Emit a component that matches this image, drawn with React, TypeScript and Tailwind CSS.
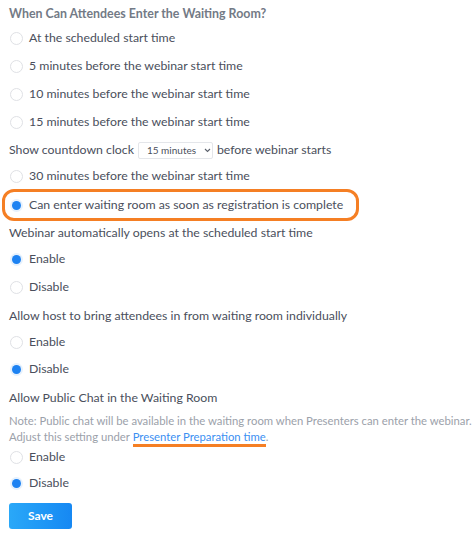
import React from "react";

type RadioProps = { label: string; checked?: boolean; h: string };

function Radio({ label, checked, h }: RadioProps) {
  return (
    <div className={`flex items-center whitespace-nowrap ${h}`}>
      {checked ? (
        <span className="w-[13px] h-[13px] rounded-full bg-[#e6f1fd] flex items-center justify-center ml-[1px]">
          <span className="w-[9px] h-[9px] rounded-full bg-[#1d82f2]" />
        </span>
      ) : (
        <span className="w-[13px] h-[13px] rounded-full border border-[#dfe1e5] bg-white ml-[1px]" />
      )}
      <span className="ml-[6px] text-[12.3px] text-[#4a4f5c]">{label}</span>
    </div>
  );
}

export default function App() {
  return (
    <div
      className="w-[476px] h-[533px] bg-white pl-[9px] overflow-hidden whitespace-nowrap"
      style={{ fontFamily: "Lato, 'Noto Sans', sans-serif" }}
    >
      <div className="h-[24px] pt-[4px] flex items-center text-[12.4px] font-bold text-[#737a86]">
        When Can Attendees Enter the Waiting Room?
      </div>
      <Radio h="h-[28px]" label="At the scheduled start time" />
      <Radio h="h-[28px]" label="5 minutes before the webinar start time" />
      <Radio h="h-[28px]" label="10 minutes before the webinar start time" />
      <Radio h="h-[28px]" label="15 minutes before the webinar start time" />

      <div className="h-[28px] flex items-center text-[12.3px] text-[#4a4f5c]">
        <span>Show countdown clock</span>
        <span className="mx-[4px] h-[17px] w-[75px] border border-[#e4e6ea] rounded-[2px] flex items-center pl-[8px] text-[10px] text-[#4a4f5c]">
          15 minutes
          <svg className="ml-[8px]" width="7" height="5" viewBox="0 0 7 5" fill="none">
            <path d="M1 1l2.5 2.5L6 1" stroke="#5b616c" strokeWidth="1.1" />
          </svg>
        </span>
        <span>before webinar starts</span>
      </div>
      <Radio h="h-[25px]" label="30 minutes before the webinar start time" />

      <div className="-ml-[7px] w-[357px] h-[32px] border-[3px] border-[#f57f24] rounded-[12px] pl-[4px] flex items-center">
        <Radio h="h-[26px]" checked label="Can enter waiting room as soon as registration is complete" />
      </div>

      <div className="h-[24px] flex items-center text-[12.3px] text-[#4a4f5c]">
        Webinar automatically opens at the scheduled start time
      </div>
      <Radio h="h-[28px]" checked label="Enable" />
      <Radio h="h-[28px]" label="Disable" />

      <div className="h-[30px] flex items-center text-[12.3px] text-[#4a4f5c]">
        Allow host to bring attendees in from waiting room individually
      </div>
      <Radio h="h-[23px]" label="Enable" />
      <Radio h="h-[30px]" checked label="Disable" />

      <div className="h-[28px] flex items-center text-[12.3px] text-[#4a4f5c]">
        Allow Public Chat in the Waiting Room
      </div>
      <div className="pt-[1px] text-[11.3px] leading-[16px] text-[#9ba1aa]">
        <div>Note: Public chat will be available in the waiting room when Presenters can enter the webinar.</div>
        <div>
          Adjust this setting under{" "}
          <span className="text-[#3b8ff2] border-b-[3px] border-[#f57f24] pb-[1px]">Presenter Preparation time</span>.
        </div>
      </div>
      <Radio h="h-[24px]" label="Enable" />
      <Radio h="h-[29px]" checked label="Disable" />

      <button className="mt-[5px] w-[63px] h-[26px] rounded-[3px] bg-gradient-to-r from-[#2aa8f8] to-[#1688f3] text-white text-[12px] font-bold">
        Save
      </button>
    </div>
  );
}
